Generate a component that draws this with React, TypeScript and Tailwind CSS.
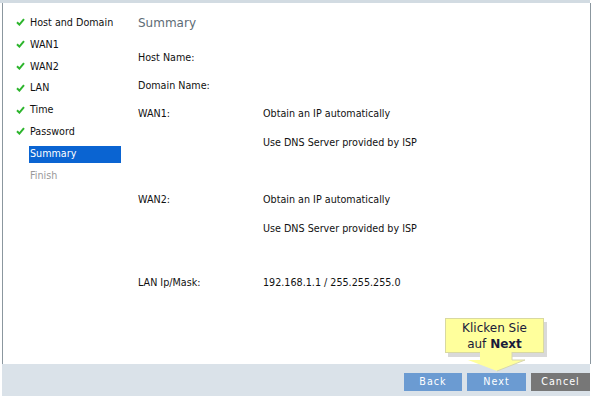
import { ReactNode } from 'react';

const font = { fontFamily: '"DejaVu Sans", Verdana, sans-serif' };

const steps = [
  { label: 'Host and Domain', done: true },
  { label: 'WAN1', done: true },
  { label: 'WAN2', done: true },
  { label: 'LAN', done: true },
  { label: 'Time', done: true },
  { label: 'Password', done: true },
  { label: 'Summary', active: true },
  { label: 'Finish' },
];

function Check() {
  return (
    <svg width="9" height="8" viewBox="0 0 9 8" className="absolute left-[-13px] top-[6px]">
      <path d="M1 4.2 L3.4 6.6 L8 1.2" fill="none" stroke="#2db52d" strokeWidth="2" />
    </svg>
  );
}

function Row({ label, value, h = 'h-[29px]' }: { label?: string; value?: ReactNode; h?: string }) {
  return (
    <div className={`flex items-center ${h}`}>
      <div className="w-[125px]">{label}</div>
      <div>{value}</div>
    </div>
  );
}

function Tooltip() {
  return (
    <div className="absolute left-[445px] top-[318px] w-[104px] h-[54px]">
      <div className="absolute left-[3px] top-[4px] w-[99px] h-[35px] bg-[#c9c9c9] opacity-70" />
      <div className="absolute left-0 top-0 w-[99px] h-[35px] bg-[#ffff9c] border border-[#d9d9a0] flex flex-col items-center justify-center text-[12px] leading-[16px] text-[#1a1a3a]" style={font}>
        <span>Klicken Sie</span>
        <span>auf <b>Next</b></span>
      </div>
      <svg width="70" height="20" viewBox="0 0 70 20" className="absolute left-[20px] top-[34px]">
        <path d="M15 0 H47 V8 H60 L32 19 L3 8 H15 Z" fill="#ffff9c" />
        <path d="M47 0 V8 H60 L32 19" fill="none" stroke="#d6d6b0" strokeWidth="1" />
      </svg>
    </div>
  );
}

export default function App() {
  return (
    <div className="relative w-[593px] h-[396px] bg-white overflow-hidden text-[9.6px] text-[#111]" style={font}>
      <div className="h-[3px] w-[590px] bg-[#d2dbe2]" />
      <div className="flex h-[361px] ml-[2px] w-[589px] border-l border-r border-[#8b979f]">
        <div className="w-[126px] pt-[9px] pl-[26px]">
          {steps.map((s) => (
            <div key={s.label} className="relative h-[21.9px] flex items-center">
              {s.done && <Check />}
              <div
                className={`w-[92px] h-[17px] flex items-center pl-[1px] ${
                  s.active ? 'bg-[#0a64d2] text-white' : s.done ? '' : 'text-[#999]'
                }`}
              >
                {s.label}
              </div>
            </div>
          ))}
        </div>
        <div className="flex-1 pl-[9px] pt-[10px]">
          <div className="text-[12px] text-[#5d6b75] h-[20px] flex items-center">Summary</div>
          <div className="mt-[10px]">
            <Row label="Host Name:" h="h-[30px]" />
            <Row label="Domain Name:" h="h-[27px]" />
            <Row label="WAN1:" value="Obtain an IP automatically" h="h-[29px]" />
            <Row value="Use DNS Server provided by ISP" h="h-[29px]" />
            <div className="h-[28px]" />
            <Row label="WAN2:" value="Obtain an IP automatically" h="h-[29px]" />
            <Row value="Use DNS Server provided by ISP" h="h-[29px]" />
            <div className="h-[25px]" />
            <Row label="LAN Ip/Mask:" value="192.168.1.1 / 255.255.255.0" h="h-[29px]" />
          </div>
        </div>
      </div>
      <div className="h-[32px] ml-[2px] w-[588px] bg-[#dae2e9] flex items-start justify-end gap-[5px] pt-[9px]">
        <button className="w-[58px] h-[18px] bg-[#6b9bd2] text-white tracking-[1px]">Back</button>
        <button className="w-[59px] h-[18px] bg-[#6b9bd2] text-white tracking-[1px]">Next</button>
        <button className="w-[59px] h-[18px] bg-[#777777] text-white tracking-[1px]">Cancel</button>
      </div>
      <Tooltip />
    </div>
  );
}
